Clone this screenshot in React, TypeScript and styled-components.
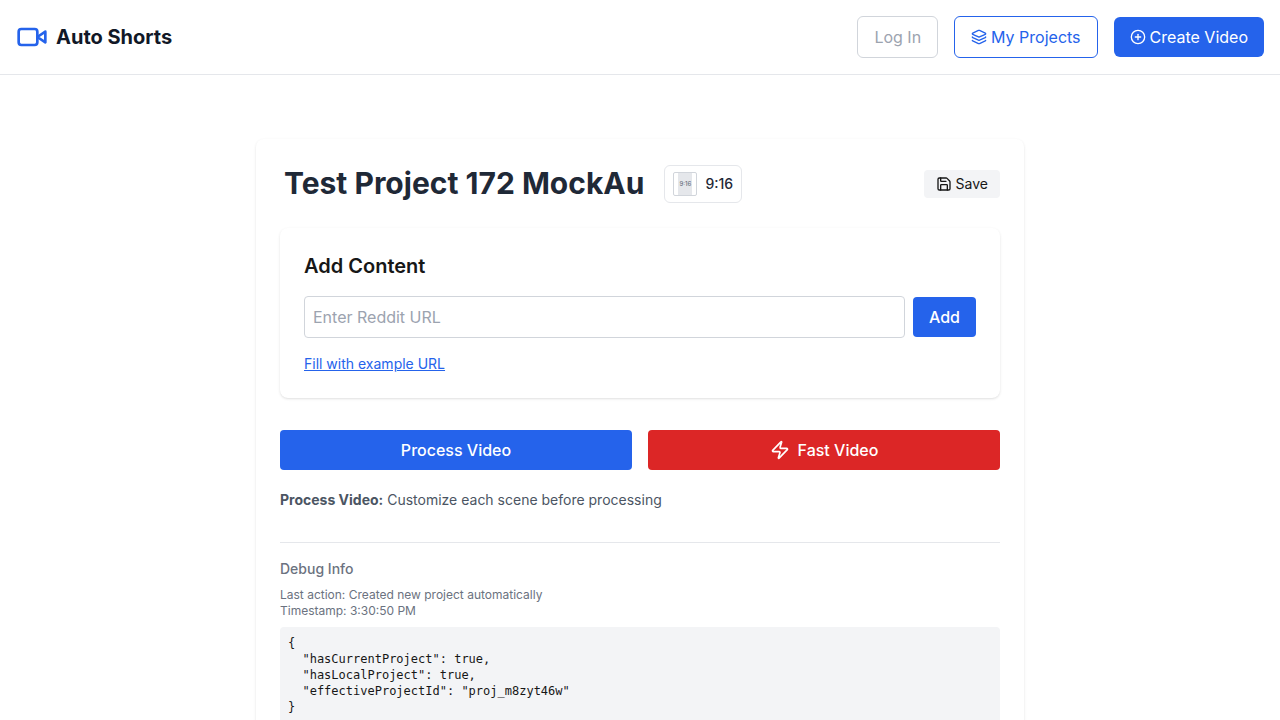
import React, { useState } from "react";
import styled, { createGlobalStyle } from "styled-components";
import { CirclePlus, Layers, Save, Zap } from "lucide-react";

const GlobalStyle = createGlobalStyle`
  *, *::before, *::after { box-sizing: border-box; }
  body {
    margin: 0;
    background: #ffffff;
    color: #171717;
    font-family: Inter, "Liberation Sans", sans-serif;
    font-size: 16px;
    line-height: 24px;
    -webkit-font-smoothing: antialiased;
  }
  h1, h2, h3, p, pre { margin: 0; }
  button, input { font: inherit; color: inherit; }
  button { cursor: pointer; }
`;

const Header = styled.header`
  display: flex;
  align-items: center;
  justify-content: space-between;
  padding: 16px;
  border-bottom: 1px solid #e5e7eb;
`;

const Brand = styled.a`
  display: flex;
  align-items: center;
  gap: 8px;
  color: #111827;
  font-size: 20px;
  line-height: 28px;
  font-weight: 700;
  text-decoration: none;
`;

const Nav = styled.nav`
  display: flex;
  align-items: center;
  gap: 16px;
`;

const navTones = {
  muted: "color: #9ca3af; border: 1px solid #d1d5db; background: #ffffff;",
  outline: "color: #2563eb; border: 1px solid #2563eb; background: #ffffff;",
  solid: "color: #ffffff; border: 0; background: #2563eb;",
};

const NavButton = styled.button<{ $tone: keyof typeof navTones }>`
  display: flex;
  align-items: center;
  gap: 4px;
  padding: 8px 16px;
  border-radius: 6px;
  ${({ $tone }) => navTones[$tone]}
`;

const Main = styled.main`
  max-width: 768px;
  margin: 0 auto;
  padding: 64px 0;
`;

const Card = styled.section`
  padding: 24px;
  border-radius: 8px;
  background: #ffffff;
  box-shadow: 0 1px 3px 0 rgba(0, 0, 0, 0.1), 0 1px 2px -1px rgba(0, 0, 0, 0.1);
`;

const TitleRow = styled.div`
  display: flex;
  align-items: center;
  justify-content: space-between;
  margin-bottom: 24px;
`;

const TitleGroup = styled.div`
  display: flex;
  align-items: center;
  gap: 16px;
`;

const Title = styled.h1`
  padding: 0 4px;
  border-bottom: 1px solid transparent;
  color: #1f2937;
  font-size: 30px;
  line-height: 40px;
  font-weight: 700;
`;

const RatioButton = styled.button`
  display: flex;
  align-items: center;
  gap: 8px;
  padding: 6px 8px;
  border: 1px solid #e5e7eb;
  border-radius: 6px;
  background: #ffffff;
  color: #1f2937;
  font-size: 14px;
  line-height: 20px;
  font-weight: 500;
`;

const RatioThumb = styled.span`
  display: flex;
  justify-content: center;
  width: 24px;
  height: 24px;
  border: 1px solid #d1d5db;
  border-radius: 2px;
`;

const RatioFrame = styled.span`
  display: flex;
  align-items: center;
  justify-content: center;
  width: 14px;
  background: #e5e7eb;
  color: #6b7280;
  font-size: 6px;
  line-height: 8px;
  font-weight: 500;
`;

const SaveButton = styled.button`
  display: flex;
  align-items: center;
  gap: 4px;
  padding: 4px 12px;
  border: 0;
  border-radius: 4px;
  background: #f3f4f6;
  font-size: 14px;
  line-height: 20px;
`;

const Panel = styled(Card)`
  margin-bottom: 32px;
`;

const PanelTitle = styled.h2`
  margin-bottom: 16px;
  font-size: 20px;
  line-height: 28px;
  font-weight: 600;
`;

const UrlForm = styled.form`
  display: flex;
  align-items: center;
  gap: 8px;
  margin-bottom: 16px;
`;

const UrlInput = styled.input`
  flex: 1;
  min-width: 0;
  height: 42px;
  padding: 8px;
  border: 1px solid #d1d5db;
  border-radius: 4px;
  background: #ffffff;
  &::placeholder { color: #9ca3af; opacity: 1; }
`;

const ActionButton = styled.button<{ $color?: string }>`
  display: flex;
  align-items: center;
  justify-content: center;
  gap: 8px;
  padding: 8px 16px;
  border: 0;
  border-radius: 4px;
  background: ${({ $color = "#2563eb" }) => $color};
  color: #ffffff;
  font-weight: 500;
`;

const TextButton = styled.button`
  display: block;
  padding: 0;
  border: 0;
  background: none;
  color: #2563eb;
  font-size: 14px;
  line-height: 20px;
  text-decoration: underline;
`;

const ActionGrid = styled.div`
  display: grid;
  grid-template-columns: 1fr 1fr;
  gap: 16px;
  margin-bottom: 20px;
`;

const Hint = styled.p`
  margin-bottom: 32px;
  color: #4b5563;
  font-size: 14px;
  line-height: 20px;
`;

const Debug = styled.section`
  padding-top: 16px;
  border-top: 1px solid #e5e7eb;
`;

const DebugTitle = styled.h3`
  margin-bottom: 8px;
  color: #6b7280;
  font-size: 14px;
  line-height: 20px;
  font-weight: 500;
`;

const DebugLine = styled.p`
  color: #6b7280;
  font-size: 12px;
  line-height: 16px;
`;

const DebugCode = styled.pre`
  margin-top: 8px;
  padding: 8px;
  overflow: auto;
  border-radius: 4px;
  background: #f3f4f6;
  font-family: "DejaVu Sans Mono", monospace;
  font-size: 12px;
  line-height: 16px;
`;

const VideoLogo = () => (
  <svg
    width="32"
    height="32"
    viewBox="0 0 24 24"
    fill="none"
    stroke="#2563eb"
    strokeWidth="2"
    strokeLinecap="round"
    strokeLinejoin="round"
    aria-hidden="true"
  >
    <path d="m22 8-6 4 6 4V8Z" />
    <rect x="2" y="6" width="14" height="12" rx="2" ry="2" />
  </svg>
);

const debugState = {
  hasCurrentProject: true,
  hasLocalProject: true,
  effectiveProjectId: "proj_m8zyt46w",
};

export default function App() {
  const [url, setUrl] = useState("");

  return (
    <>
      <GlobalStyle />
      <Header>
        <Brand href="#">
          <VideoLogo />
          Auto Shorts
        </Brand>
        <Nav>
          <NavButton $tone="muted">Log In</NavButton>
          <NavButton $tone="outline">
            <Layers size={16} />
            My Projects
          </NavButton>
          <NavButton $tone="solid">
            <CirclePlus size={16} />
            Create Video
          </NavButton>
        </Nav>
      </Header>
      <Main>
        <Card>
          <TitleRow>
            <TitleGroup>
              <Title>Test Project 172 MockAu</Title>
              <RatioButton>
                <RatioThumb>
                  <RatioFrame>9:16</RatioFrame>
                </RatioThumb>
                9:16
              </RatioButton>
            </TitleGroup>
            <SaveButton>
              <Save size={16} />
              Save
            </SaveButton>
          </TitleRow>
          <Panel>
            <PanelTitle>Add Content</PanelTitle>
            <UrlForm onSubmit={(event) => event.preventDefault()}>
              <UrlInput
                type="text"
                aria-label="Reddit URL"
                placeholder="Enter Reddit URL"
                value={url}
                onChange={(event) => setUrl(event.target.value)}
              />
              <ActionButton type="submit">Add</ActionButton>
            </UrlForm>
            <TextButton
              type="button"
              onClick={() => setUrl("https://www.reddit.com/r/stories/")}
            >
              Fill with example URL
            </TextButton>
          </Panel>
          <ActionGrid>
            <ActionButton>Process Video</ActionButton>
            <ActionButton $color="#dc2626">
              <Zap size={20} />
              Fast Video
            </ActionButton>
          </ActionGrid>
          <Hint>
            <strong>Process Video:</strong> Customize each scene before processing
          </Hint>
          <Debug>
            <DebugTitle>Debug Info</DebugTitle>
            <DebugLine>Last action: Created new project automatically</DebugLine>
            <DebugLine>Timestamp: 3:30:50 PM</DebugLine>
            <DebugCode>{JSON.stringify(debugState, null, 2)}</DebugCode>
          </Debug>
        </Card>
      </Main>
    </>
  );
}
